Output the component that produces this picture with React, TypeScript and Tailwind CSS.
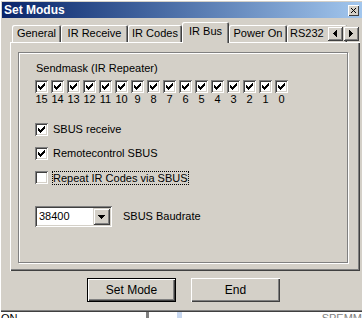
import React from 'react'

const sunken =
  'shadow-[inset_1px_1px_0_#808080,inset_-1px_-1px_0_#ffffff,inset_2px_2px_0_#404040,inset_-2px_-2px_0_#d4d0c8]'
const raised =
  'shadow-[inset_1px_1px_0_#d4d0c8,inset_-1px_-1px_0_#404040,inset_2px_2px_0_#ffffff,inset_-2px_-2px_0_#808080]'

function Check() {
  // classic 7x7 check glyph, drawn as 3px columns
  const cols = [2, 3, 4, 3, 2, 1, 0]
  return (
    <svg width="7" height="7" viewBox="0 0 7 7" shapeRendering="crispEdges">
      {cols.map((y, x) => (
        <rect key={x} x={x} y={y} width="1" height="3" fill="#000" />
      ))}
    </svg>
  )
}

function CheckBox({ checked }: { checked: boolean }) {
  return (
    <div className={`w-[13px] h-[13px] bg-white flex items-center justify-center shrink-0 ${sunken}`}>
      {checked && <Check />}
    </div>
  )
}

function Tab({ label, width, selected, left }: { label: string; width: number; selected?: boolean; left?: boolean }) {
  if (selected) {
    return (
      <div
        className="relative z-10 h-[21px] -mb-[1px] bg-[#d4d0c8] rounded-t-[2px] flex justify-center pt-[3px] shrink-0 shadow-[inset_1px_1px_0_#ffffff,inset_-1px_0_0_#404040,inset_-2px_0_0_#808080]"
        style={{ width }}
      >
        <span className="leading-[13px] whitespace-nowrap">{label}</span>
      </div>
    )
  }
  return (
    <div
      className={`h-[17px] bg-[#d4d0c8] rounded-t-[2px] flex pt-[2px] shrink-0 shadow-[inset_1px_1px_0_#ffffff,inset_-1px_0_0_#404040,inset_-2px_0_0_#808080] ${
        left ? 'justify-start pl-[3px]' : 'justify-center'
      }`}
      style={{ width }}
    >
      <span className="leading-[13px] whitespace-nowrap">{label}</span>
    </div>
  )
}

function ArrowButton({ dir }: { dir: 'left' | 'right' }) {
  return (
    <div className={`w-[16px] h-[15px] bg-[#d4d0c8] flex items-center justify-center ${raised}`}>
      <svg width="4" height="7" viewBox="0 0 4 7" shapeRendering="crispEdges">
        {dir === 'left' ? (
          <path d="M0 3.5 L4 0 L4 7 Z" fill="#000" />
        ) : (
          <path d="M4 3.5 L0 0 L0 7 Z" fill="#000" />
        )}
      </svg>
    </div>
  )
}

export default function App() {
  const bits = [15, 14, 13, 12, 11, 10, 9, 8, 7, 6, 5, 4, 3, 2, 1, 0]

  return (
    <div className="w-[362px] h-[318px] overflow-hidden bg-white text-black text-[11px] font-['Liberation_Sans',Arial,sans-serif]">
      {/* window */}
      <div className="w-[370px] h-[312px] bg-[#d4d0c8] pt-[2px] pl-[2px] shadow-[inset_1px_1px_0_#ffffff,inset_-1px_-1px_0_#404040,inset_-2px_-2px_0_#808080]">
        {/* title bar */}
        <div className="h-[16px] w-[366px] bg-gradient-to-r from-[#0a246a] to-[#a6caf0] flex items-center justify-between pl-[2px] pr-[9px]">
          <span className="text-white font-bold text-[12px] leading-[14px] whitespace-nowrap">Set Modus</span>
          <div className="w-[11px] h-[11px] bg-[#d4d0c8] flex items-center justify-center shadow-[inset_1px_1px_0_#ffffff,inset_-1px_-1px_0_#404040]">
            <svg width="5" height="5" viewBox="0 0 5 5" shapeRendering="crispEdges">
              <path d="M0 0 L5 5 M5 0 L0 5" stroke="#000" strokeWidth="1.2" />
            </svg>
          </div>
        </div>

        {/* tabs */}
        <div className="relative ml-[8px] mt-[4px] h-[20px] w-[350px] flex items-end pl-[2px]">
          <Tab label="General" width={49} />
          <Tab label="IR Receive" width={67} />
          <Tab label="IR Codes" width={54} />
          <Tab label="IR Bus" width={47} selected />
          <Tab label="Power On" width={58} />
          <Tab label="RS232" width={60} left />
          <div className="absolute left-[317px] top-[4px] flex">
            <ArrowButton dir="left" />
            <ArrowButton dir="right" />
          </div>
        </div>

        {/* panel */}
        <div className="ml-[8px] w-[350px] h-[229px] pl-[8px] pt-[10px] shadow-[inset_1px_1px_0_#ffffff,inset_-1px_-1px_0_#404040,inset_-2px_-2px_0_#808080]">
          <div className="w-[330px] h-[211px] border border-[#808080] shadow-[inset_1px_1px_0_#ffffff,1px_1px_0_#ffffff] pl-[16px] pt-[9px]">
            <div className="leading-[13px] ml-[1px]">Sendmask (IR Repeater)</div>

            <div className="flex gap-[3px] mt-[5px]">
              {bits.map((b) => (
                <div key={b} className="w-[13px] flex flex-col items-center">
                  <CheckBox checked />
                  <span className="leading-[13px] whitespace-nowrap">{b}</span>
                </div>
              ))}
            </div>

            <div className="flex flex-col gap-[11px] mt-[17px]">
              <div className="flex items-center gap-[5px] h-[13px]">
                <CheckBox checked />
                <span className="leading-[13px]">SBUS receive</span>
              </div>
              <div className="flex items-center gap-[5px] h-[13px]">
                <CheckBox checked />
                <span className="leading-[13px]">Remotecontrol SBUS</span>
              </div>
              <div className="flex items-center gap-[4px] h-[13px]">
                <CheckBox checked={false} />
                <span className="leading-[12px] border border-dotted border-black">
                  Repeat IR Codes via SBUS
                </span>
              </div>
            </div>

            <div className="flex items-center mt-[22px]">
              <div className={`w-[77px] h-[21px] bg-white flex items-center justify-between pl-[4px] pr-[2px] ${sunken}`}>
                <span className="leading-[13px]">38400</span>
                <div className={`w-[17px] h-[17px] bg-[#d4d0c8] flex items-center justify-center ${raised}`}>
                  <svg width="7" height="4" viewBox="0 0 7 4" shapeRendering="crispEdges">
                    <path d="M0 0 H7 L3.5 4 Z" fill="#000" />
                  </svg>
                </div>
              </div>
              <span className="ml-[11px] leading-[13px]">SBUS Baudrate</span>
            </div>
          </div>
        </div>

        {/* buttons */}
        <div className="flex gap-[15px] ml-[85px] mt-[7px]">
          <div className="w-[89px] h-[24px] border border-black flex items-center justify-center shadow-[inset_1px_1px_0_#ffffff,inset_-1px_-1px_0_#404040,inset_-2px_-2px_0_#808080]">
            <span className="leading-[13px] text-[12px]">Set Mode</span>
          </div>
          <div className="w-[89px] h-[24px] flex items-center justify-center shadow-[inset_1px_1px_0_#ffffff,inset_-1px_-1px_0_#404040,inset_-2px_-2px_0_#808080]">
            <span className="leading-[13px] text-[12px]">End</span>
          </div>
        </div>
      </div>

      {/* window behind, peeking out below */}
      <div className="h-[6px] flex items-start overflow-hidden">
        <span className="pl-[1px] leading-[13px] text-[11px]">ON</span>
        <div className="ml-[128px] w-[4px] h-[6px] bg-[#808080]" />
        <div className="ml-[28px] w-[6px] h-[6px] bg-[#c8d8f0]" />
        <span className="ml-[140px] leading-[13px] text-[11px] text-[#808080]">SPEMM</span>
      </div>
    </div>
  )
}
